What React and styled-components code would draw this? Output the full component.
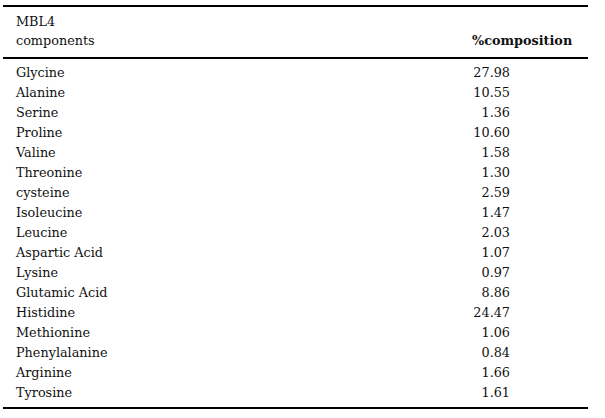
import React from "react";
import styled, { createGlobalStyle } from "styled-components";

const Global = createGlobalStyle`
  html, body { margin: 0; padding: 0; background: #fff; }
  body { font-family: "DejaVu Serif", "Liberation Serif", serif; color: #111; }
`;

const Wrap = styled.div`
  padding: 5px 0 0 3px;
  width: 585px;
`;

const Table = styled.table`
  width: 585px;
  border-collapse: collapse;
  border-top: 2px solid #000;
  border-bottom: 2px solid #000;
  font-size: 12.8px;
`;

const HeadCell = styled.th`
  text-align: left;
  vertical-align: bottom;
  font-weight: ${(p) => (p.$bold ? 700 : 400)};
  line-height: 19px;
  padding: 5px 0 7px ${(p) => p.$pl || 0}px;
  border-bottom: 2px solid #000;
`;

const Cell = styled.td`
  line-height: 20px;
  height: 20px;
  padding: 0 0 0 ${(p) => p.$pl || 0}px;
  padding-top: ${(p) => (p.$first ? 4 : 0)}px;
  padding-bottom: ${(p) => (p.$last ? 4 : 0)}px;
`;

const Num = styled.span`
  display: inline-block;
  width: 38px;
  text-align: right;
`;

const rows = [
  ["Glycine", "27.98"],
  ["Alanine", "10.55"],
  ["Serine", "1.36"],
  ["Proline", "10.60"],
  ["Valine", "1.58"],
  ["Threonine", "1.30"],
  ["cysteine", "2.59"],
  ["Isoleucine", "1.47"],
  ["Leucine", "2.03"],
  ["Aspartic Acid", "1.07"],
  ["Lysine", "0.97"],
  ["Glutamic Acid", "8.86"],
  ["Histidine", "24.47"],
  ["Methionine", "1.06"],
  ["Phenylalanine", "0.84"],
  ["Arginine", "1.66"],
  ["Tyrosine", "1.61"],
];

export default function App() {
  return (
    <Wrap>
      <Global />
      <Table>
        <thead>
          <tr>
            <HeadCell $pl={13}>
              MBL4
              <br />
              components
            </HeadCell>
            <HeadCell $bold style={{ width: 116 }}>%composition</HeadCell>
          </tr>
        </thead>
        <tbody>
          {rows.map(([n, v], i) => (
            <tr key={n}>
              <Cell $pl={13} $first={i === 0} $last={i === rows.length - 1}>{n}</Cell>
              <Cell $first={i === 0} $last={i === rows.length - 1}>
                <Num>{v}</Num>
              </Cell>
            </tr>
          ))}
        </tbody>
      </Table>
    </Wrap>
  );
}
